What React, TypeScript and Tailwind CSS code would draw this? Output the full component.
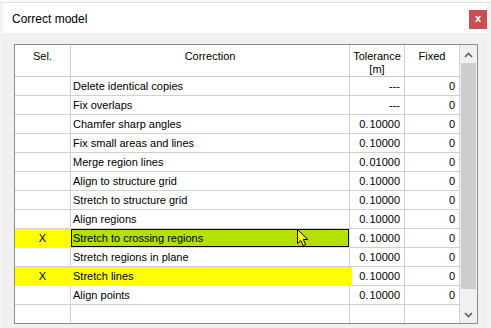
import React from "react";

type Row = { sel: string; name: string; tol: string; fixed: string; hl?: "yellow" | "green" };

const rows: Row[] = [
  { sel: "", name: "Delete identical copies", tol: "---", fixed: "0" },
  { sel: "", name: "Fix overlaps", tol: "---", fixed: "0" },
  { sel: "", name: "Chamfer sharp angles", tol: "0.10000", fixed: "0" },
  { sel: "", name: "Fix small areas and lines", tol: "0.10000", fixed: "0" },
  { sel: "", name: "Merge region lines", tol: "0.01000", fixed: "0" },
  { sel: "", name: "Align to structure grid", tol: "0.10000", fixed: "0" },
  { sel: "", name: "Stretch to structure grid", tol: "0.10000", fixed: "0" },
  { sel: "", name: "Align regions", tol: "0.10000", fixed: "0" },
  { sel: "X", name: "Stretch to crossing regions", tol: "0.10000", fixed: "0", hl: "green" },
  { sel: "", name: "Stretch regions in plane", tol: "0.10000", fixed: "0" },
  { sel: "X", name: "Stretch lines", tol: "0.10000", fixed: "0", hl: "yellow" },
  { sel: "", name: "Align points", tol: "0.10000", fixed: "0" },
];

function Tol({ v }: { v: string }) {
  if (v.startsWith("0.")) {
    return (
      <span>
        0.<span className="ml-[1px]">{v.slice(2)}</span>
      </span>
    );
  }
  return <span>{v}</span>;
}

function Chevron({ down }: { down?: boolean }) {
  return (
    <svg width="9" height="6" viewBox="0 0 9 6">
      <path
        d={down ? "M1 1 L4.5 4.5 L8 1" : "M1 5 L4.5 1.5 L8 5"}
        fill="none"
        stroke="#606060"
        strokeWidth="1.6"
      />
    </svg>
  );
}

export default function App() {
  return (
    <div className="relative w-[491px] h-[328px] overflow-hidden bg-[#f2f2f2] font-['Liberation_Sans',Arial,sans-serif] text-black">
      <div className="h-[3px] border-b border-[#e0e0e0] bg-[#fafafa]" />
      <div className="ml-[3px] w-[484px] flex flex-col">
        {/* title bar */}
        <div className="h-[30px] bg-white flex items-start justify-between">
          <div className="pl-[9px] pt-[9px] text-[12px] leading-[14px]">Correct model</div>
          <div className="mt-[7px] w-[18px] h-[19px] bg-[#c75050] flex items-center justify-center text-white text-[11px] font-bold leading-none pb-[2px]">
            x
          </div>
        </div>
        {/* body */}
        <div className="bg-[#f0f0f0] pl-[11px] pt-[11px] h-[300px]">
          <div className="w-[464px] border border-[#8c8c8c] bg-white flex text-[11px]">
            <div className="flex flex-col">
              {/* header */}
              <div className="flex h-[32px] border-b border-[#c8c8c8] leading-[13px]">
                <div className="w-[56px] border-r border-[#d0d0d0] text-center pt-[5px]">Sel.</div>
                <div className="w-[279px] border-r border-[#d0d0d0] text-center pt-[5px]">Correction</div>
                <div className="w-[55px] border-r border-[#d0d0d0] text-center pt-[5px]">
                  Tolerance
                  <br />
                  [m]
                </div>
                <div className="w-[55px] border-r border-[#d0d0d0] text-center pt-[5px]">Fixed</div>
              </div>
              {rows.map((r, i) => {
                const hl = !!r.hl;
                return (
                  <div key={i} className="flex h-[19px] leading-[18px]">
                    <div
                      className={
                        hl
                          ? "w-[56px] border-r border-b border-[#ffff00] bg-[#ffff00] text-center"
                          : "w-[56px] border-r border-b border-[#d0d0d0] text-center"
                      }
                    >
                      {r.sel}
                    </div>
                    {r.hl === "green" ? (
                      <div className="w-[279px] border-r border-b border-[#ffff00] bg-[#ffff00]">
                        <div className="h-[18px] border border-black bg-[#b6e000] pl-[1px] leading-[16px]">{r.name}</div>
                      </div>
                    ) : r.hl === "yellow" ? (
                      <div className="w-[281px] -mr-[2px] relative border-b border-[#ffff00] bg-[#ffff00] pl-[2px]">{r.name}</div>
                    ) : (
                      <div className="w-[279px] border-r border-b border-[#d0d0d0] pl-[2px]">{r.name}</div>
                    )}
                    <div className="w-[55px] border-r border-b border-[#d0d0d0] text-right pr-[4px]">
                      <Tol v={r.tol} />
                    </div>
                    <div className="w-[55px] border-r border-b border-[#d0d0d0] text-right pr-[4px]">{r.fixed}</div>
                  </div>
                );
              })}
              <div className="flex h-[18px]">
                <div className="w-[56px] border-r border-[#d0d0d0]" />
                <div className="w-[279px] border-r border-[#d0d0d0]" />
                <div className="w-[55px] border-r border-[#d0d0d0]" />
                <div className="w-[55px] border-r border-[#d0d0d0]" />
              </div>
            </div>
            {/* scrollbar */}
            <div className="w-[17px] bg-[#f0f0f0] flex flex-col">
              <div className="h-[18px] flex items-center justify-center pt-[1px]">
                <Chevron />
              </div>
              <div className="h-[226px] mx-[1px] bg-[#cdcdcd]" />
              <div className="flex-1" />
              <div className="h-[17px] flex items-center justify-center">
                <Chevron down />
              </div>
            </div>
          </div>
        </div>
      </div>
      {/* mouse cursor */}
      <svg className="absolute left-[297px] top-[229px]" width="13" height="19" viewBox="0 0 13 19">
        <path
          d="M0.5 0.5 L0.5 14.5 L3.8 11.4 L6.2 16.8 L8.6 15.7 L6.3 10.5 L10.8 10.5 Z"
          fill="#ffff00"
          stroke="#000"
          strokeWidth="1"
          strokeLinejoin="round"
        />
      </svg>
    </div>
  );
}
